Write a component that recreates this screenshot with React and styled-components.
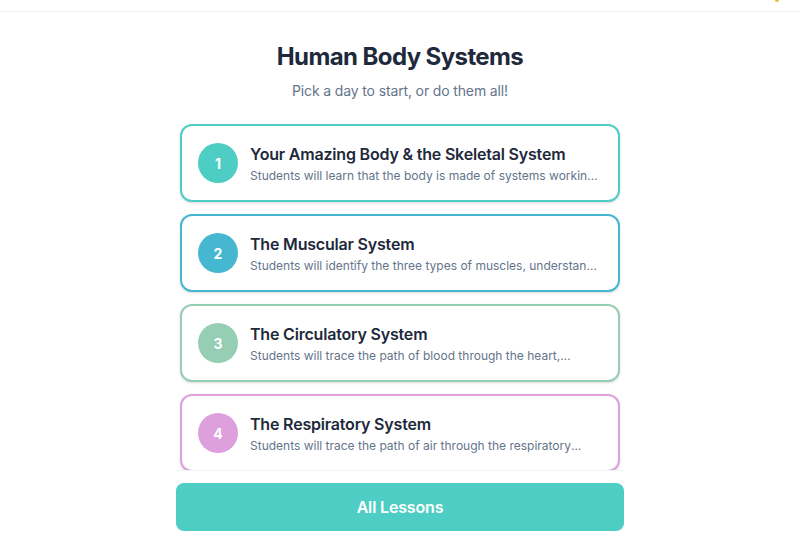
import React from "react";
import styled, { createGlobalStyle } from "styled-components";

const lessons = [
  {
    day: 1,
    color: "#4ECDC4",
    title: "Your Amazing Body & the Skeletal System",
    summary:
      "Students will learn that the body is made of systems working together and explore the bones of the skeleton.",
  },
  {
    day: 2,
    color: "#45B7D1",
    title: "The Muscular System",
    summary:
      "Students will identify the three types of muscles, understand how muscles work in pairs.",
  },
  {
    day: 3,
    color: "#96CEB4",
    title: "The Circulatory System",
    summary:
      "Students will trace the path of blood through the heart, arteries, capillaries and veins.",
  },
  {
    day: 4,
    color: "#DDA0DD",
    title: "The Respiratory System",
    summary:
      "Students will trace the path of air through the respiratory system and lungs.",
  },
];

const App = () => {
  return (
    <>
      <GlobalStyle />
      <Page>
        <TopBar>
          <Spark />
        </TopBar>
        <Main>
          <Title>Human Body Systems</Title>
          <Subtitle>Pick a day to start, or do them all!</Subtitle>
          <LessonList>
            {lessons.map((lesson) => (
              <LessonCard key={lesson.day} $color={lesson.color}>
                <DayBadge $color={lesson.color}>{lesson.day}</DayBadge>
                <LessonText>
                  <LessonTitle>{lesson.title}</LessonTitle>
                  <LessonSummary>{lesson.summary}</LessonSummary>
                </LessonText>
              </LessonCard>
            ))}
          </LessonList>
          <Footer>
            <AllButton>All Lessons</AllButton>
          </Footer>
        </Main>
      </Page>
    </>
  );
};

export default App;

// Styled Components
const GlobalStyle = createGlobalStyle`
  * { box-sizing: border-box; }
  html, body { margin: 0; padding: 0; background: #fff; }
  body {
    font-family: Inter, "Noto Sans", "Liberation Sans", sans-serif;
    -webkit-font-smoothing: antialiased;
  }
`;

const Page = styled.div`
  height: 100vh;
  display: flex;
  flex-direction: column;
  overflow: hidden;
`;

const TopBar = styled.header`
  height: 12px;
  flex-shrink: 0;
  border-bottom: 1px solid #f1f2f4;
  display: flex;
  justify-content: flex-end;
  padding-right: 21px;
`;

const Spark = styled.span`
  width: 4px;
  height: 2px;
  border-radius: 0 0 2px 2px;
  background: #f5b53c;
`;

const Main = styled.main`
  flex: 1;
  min-height: 0;
  width: 448px;
  margin: 0 auto;
  padding: 29px 0 19px;
  display: flex;
  flex-direction: column;
`;

const Title = styled.h1`
  margin: 0;
  text-align: center;
  font-size: 24px;
  line-height: 32px;
  font-weight: 700;
  letter-spacing: -0.025em;
  color: #1e293b;
`;

const Subtitle = styled.p`
  margin: 8px 0 0;
  text-align: center;
  font-size: 14px;
  line-height: 20px;
  letter-spacing: -0.01em;
  color: #64748b;
`;

const LessonList = styled.div`
  flex: 1;
  min-height: 0;
  margin-top: 19px;
  padding: 4px;
  overflow: hidden;
  border-bottom: 1px solid #f1f2f4;
  display: flex;
  flex-direction: column;
  gap: 12px;
`;

const LessonCard = styled.button`
  flex-shrink: 0;
  display: flex;
  align-items: center;
  gap: 12px;
  width: 100%;
  padding: 16px;
  background: #fff;
  border: 2px solid ${(p) => p.$color};
  border-radius: 12px;
  box-shadow: 0 1px 3px rgba(15, 23, 42, 0.1), 0 1px 2px rgba(15, 23, 42, 0.06);
  font-family: inherit;
  text-align: left;
  cursor: pointer;
`;

const DayBadge = styled.span`
  flex-shrink: 0;
  width: 40px;
  height: 40px;
  border-radius: 50%;
  background: ${(p) => p.$color};
  color: #fff;
  font-size: 14px;
  font-weight: 700;
  display: flex;
  align-items: center;
  justify-content: center;
`;

const LessonText = styled.div`
  min-width: 0;
  flex: 1;
`;

const LessonTitle = styled.div`
  font-size: 16px;
  line-height: 24px;
  font-weight: 600;
  letter-spacing: -0.012em;
  color: #1e293b;
`;

const LessonSummary = styled.div`
  margin-top: 2px;
  font-size: 12px;
  line-height: 16px;
  color: #64748b;
  display: -webkit-box;
  -webkit-box-orient: vertical;
  -webkit-line-clamp: 1;
  overflow: hidden;
`;

const Footer = styled.div`
  flex-shrink: 0;
  padding-top: 12px;
`;

const AllButton = styled.button`
  width: 100%;
  height: 48px;
  border: none;
  border-radius: 8px;
  background: #4ecdc4;
  color: #fff;
  font-family: inherit;
  font-size: 16px;
  font-weight: 600;
  letter-spacing: -0.01em;
  cursor: pointer;
`;
